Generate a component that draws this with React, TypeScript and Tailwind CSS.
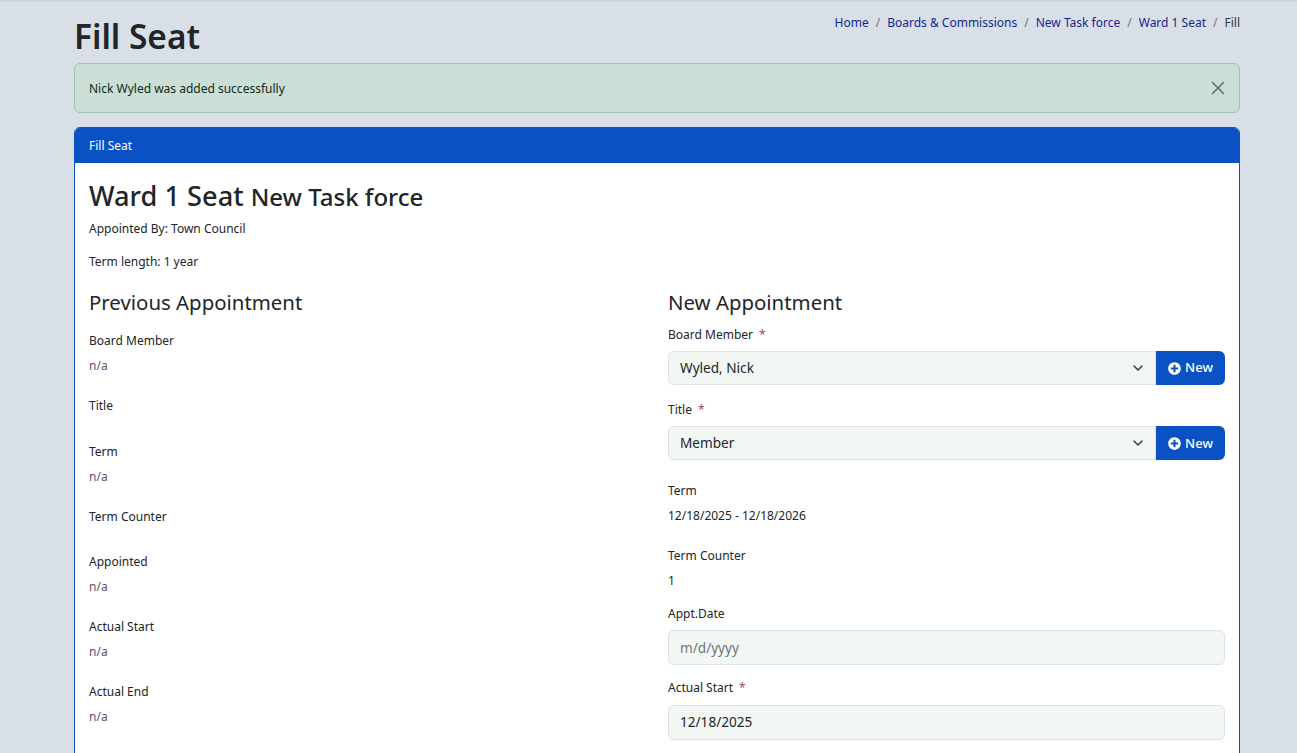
import { ChevronDown, X } from "lucide-react"

const crumbs = ["Home", "Boards & Commissions", "New Task force", "Ward 1 Seat"]

function ReadOnlyField({ label, value }: { label: string; value?: string }) {
  return (
    <div className="flex flex-col pb-[20.5px]">
      <div className="mb-[6px] text-[12px] leading-[19.2px] text-[#212529]">{label}</div>
      {value && <div className="text-[12px] leading-[19.2px] text-[#5c5560]">{value}</div>}
    </div>
  )
}

function FieldLabel({ label, required }: { label: string; required?: boolean }) {
  return (
    <div className="mb-[7px] flex text-[12px] leading-[19.2px] text-[#212529]">
      {label}
      {required && <span className="ml-[6px] text-[#a9446a]">*</span>}
    </div>
  )
}

function PlusCircle() {
  return (
    <svg width="13" height="13" viewBox="0 0 512 512" fill="currentColor">
      <path d="M256 8C119 8 8 119 8 256s111 248 248 248 248-111 248-248S393 8 256 8zm144 276c0 6.600-5.400 12-12 12h-92v92c0 6.600-5.400 12-12 12h-56c-6.600 0-12-5.400-12-12v-92h-92c-6.600 0-12-5.400-12-12v-56c0-6.600 5.400-12 12-12h92v-92c0-6.600 5.400-12 12-12h56c6.600 0 12 5.400 12 12v92h92c6.600 0 12 5.400 12 12v56z" />
    </svg>
  )
}

function SelectField({ label, value }: { label: string; value: string }) {
  return (
    <div className="mb-[15px]">
      <FieldLabel label={label} required />
      <div className="flex h-[34px]">
        <div className="flex flex-1 items-center justify-between rounded-l-[6px] border border-[#dee2e6] bg-[#f3f7f4] pl-[11px] pr-[9px] text-[13.6px] text-[#212529]">
          {value}
          <ChevronDown size={16} strokeWidth={2.2} className="text-[#343a40]" />
        </div>
        <button className="flex w-[69px] items-center justify-center gap-[4px] rounded-r-[6px] bg-[#0a51c4] text-[13px] font-medium text-white">
          <PlusCircle />
          New
        </button>
      </div>
    </div>
  )
}

function DateField({ label, value, required, placeholder }: { label: string; value: string; required?: boolean; placeholder?: boolean }) {
  return (
    <div className="mb-[13px]">
      <FieldLabel label={label} required={required} />
      <div
        className={`flex h-[35px] items-center rounded-[6px] border border-[#dee2e6] bg-[#f3f7f4] px-[11px] text-[13.6px] ${
          placeholder ? "text-[#6c757d]" : "text-[#212529]"
        }`}
      >
        {value}
      </div>
    </div>
  )
}

export default function App() {
  return (
    <div className="h-screen overflow-hidden border-t-2 border-[#d0d5de] bg-[#d9dfe7] font-['Noto_Sans',sans-serif] text-[#212529]">
      <div className="ml-[74px] w-[1166px]">
        <div className="flex h-[61px] items-start justify-between">
          <h1 className="pt-[13px] text-[33.4px] font-semibold leading-[42px]">Fill Seat</h1>
          <nav className="flex pt-[11px] text-[12px] leading-[19px]">
            {crumbs.map((c) => (
              <span key={c} className="flex">
                <span className="text-[#14268f]">{c}</span>
                <span className="px-[7px] text-[#6c757d]">/</span>
              </span>
            ))}
            <span className="text-[#343a40]">Fill</span>
          </nav>
        </div>

        <div className="flex h-[50px] items-center justify-between rounded-[6px] border border-[#9fc5b0] bg-[#cbdfd6] pl-[14px] pr-[10px] text-[12px] text-[#0f2a20]">
          <span className="pt-[1px]">Nick Wyled was added successfully</span>
          <X size={22} strokeWidth={1.6} className="text-[#5f6f68]" />
        </div>

        <div className="mt-[14px] h-[700px] rounded-[6px] border border-[#0a51c4] bg-white">
          <div className="flex h-[35px] items-center rounded-t-[5px] bg-[#0a51c4] px-[14px] text-[12px] text-white">Fill Seat</div>
          <div className="px-[14px] pt-[14px]">
            <h2 className="text-[27.2px] font-medium leading-[38px]">
              Ward 1 Seat <span className="text-[24px]">New Task force</span>
            </h2>
            <p className="mt-[3px] text-[12px] leading-[19px]">Appointed By: Town Council</p>
            <p className="mt-[14px] text-[12px] leading-[19px]">Term length: 1 year</p>

            <div className="mt-[15px] grid grid-cols-2 gap-x-[22px]">
              <div>
                <h3 className="mb-[13px] text-[20.4px] leading-[32px]">Previous Appointment</h3>
                <ReadOnlyField label="Board Member" value="n/a" />
                <ReadOnlyField label="Title" />
                <ReadOnlyField label="Term" value="n/a" />
                <ReadOnlyField label="Term Counter" />
                <ReadOnlyField label="Appointed" value="n/a" />
                <ReadOnlyField label="Actual Start" value="n/a" />
                <ReadOnlyField label="Actual End" value="n/a" />
              </div>
              <div>
                <h3 className="mb-[7px] text-[20.4px] leading-[32px]">New Appointment</h3>
                <SelectField label="Board Member" value="Wyled, Nick" />
                <SelectField label="Title" value="Member" />
                <div className="mt-[21px] mb-[15px]">
                  <div className="mb-[5px] text-[12px] leading-[19.2px]">Term</div>
                  <div className="text-[12px] leading-[19.2px]">12/18/2025 - 12/18/2026</div>
                </div>
                <div className="mt-[21px] mb-[14px]">
                  <div className="mb-[6px] text-[12px] leading-[19.2px]">Term Counter</div>
                  <div className="text-[12px] leading-[19.2px]">1</div>
                </div>
                <DateField label="Appt.Date" value="m/d/yyyy" placeholder />
                <DateField label="Actual Start" value="12/18/2025" required />
              </div>
            </div>
          </div>
        </div>
      </div>
    </div>
  )
}
